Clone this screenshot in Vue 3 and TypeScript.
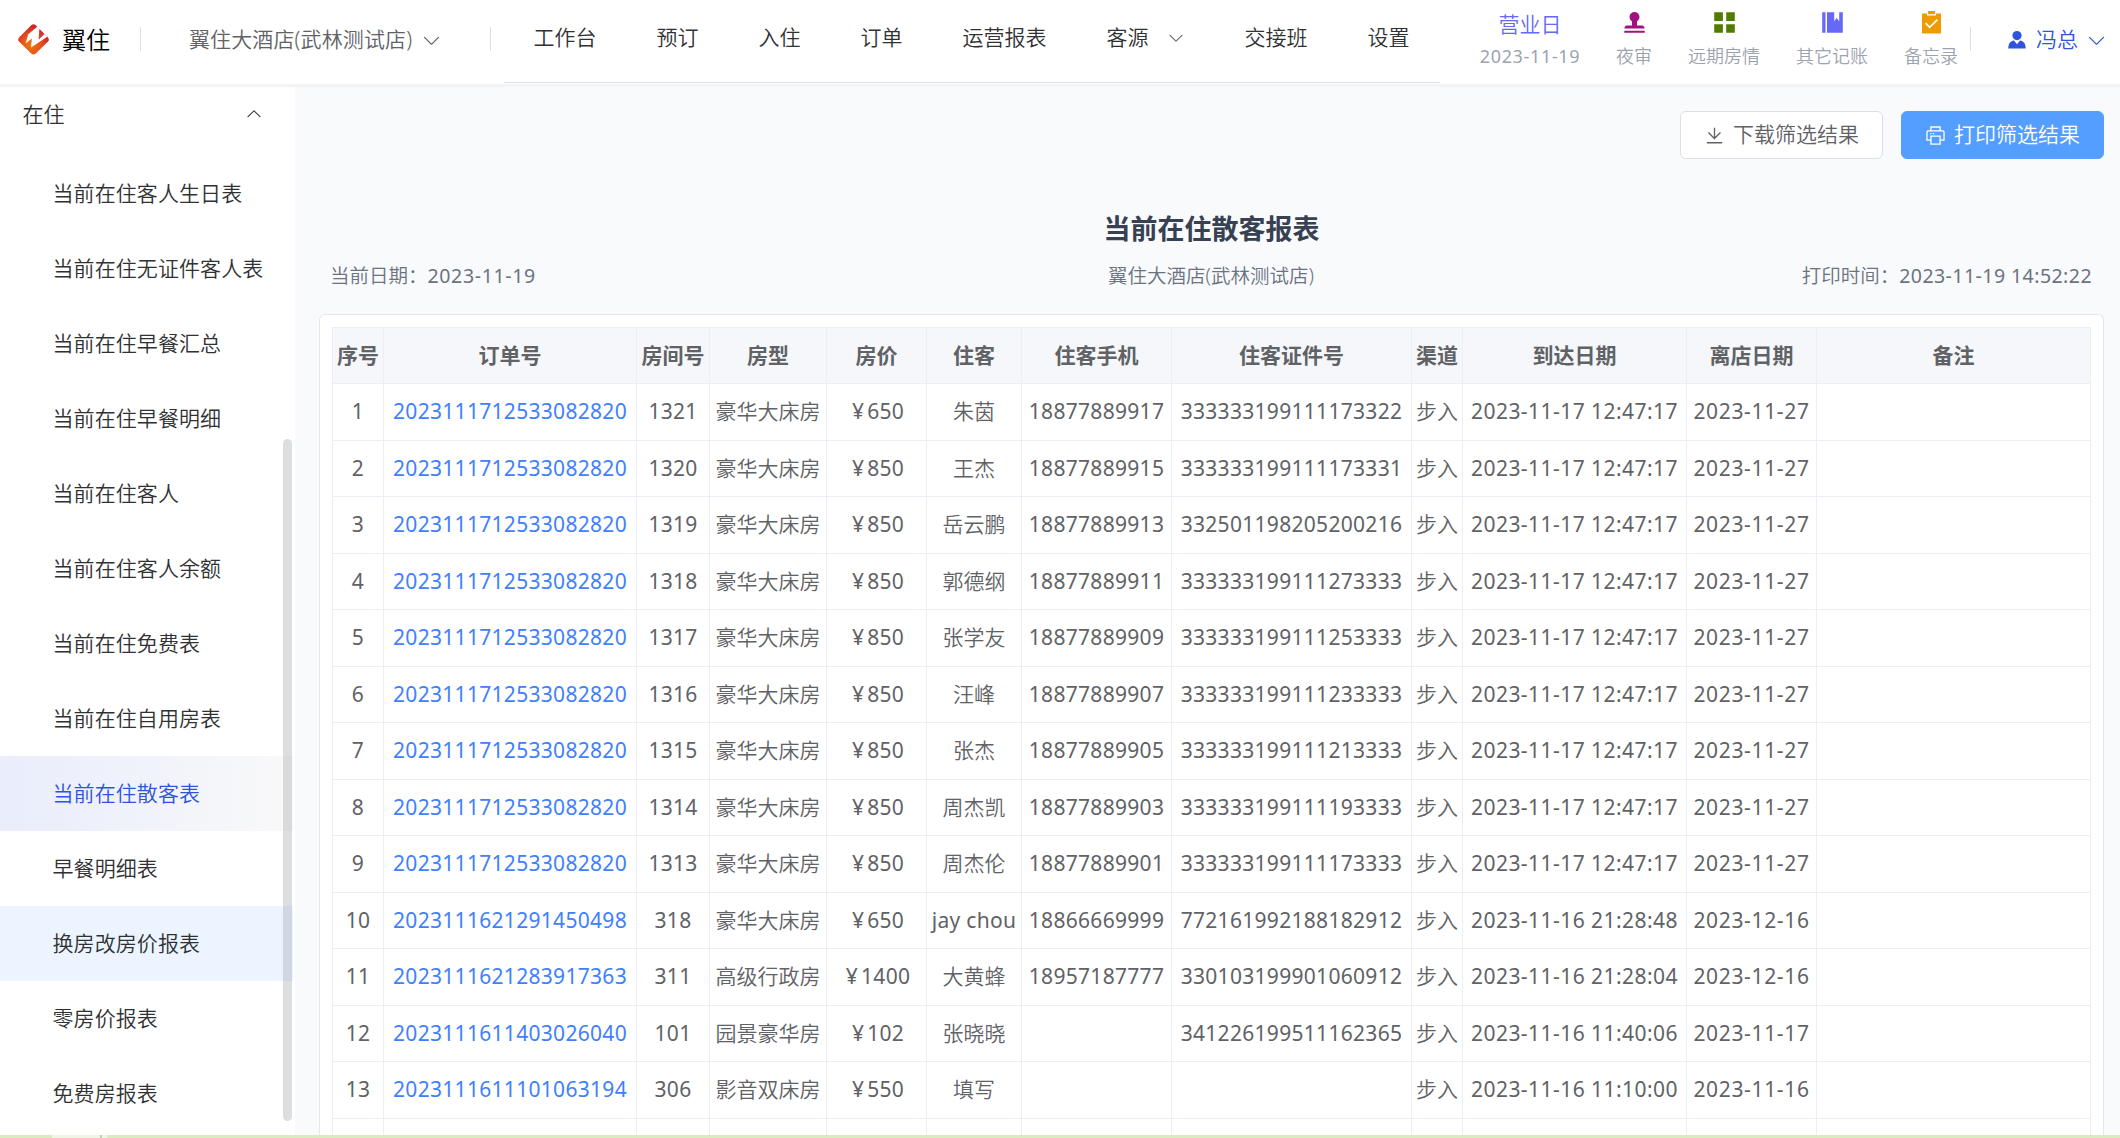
<script setup lang="ts">
interface NavItem { label: string; arrow?: boolean }
interface Guest {
  order: string; room: string; type: string; price: string; name: string
  phone: string; idNo: string; arrive: string; leave: string
}

const arrowDown = 'M831.872 340.864 512 652.672 192.128 340.864a30.592 30.592 0 0 0-42.752 0 29.12 29.12 0 0 0 0 41.6L489.664 714.24a32 32 0 0 0 44.672 0l340.288-331.712a29.12 29.12 0 0 0 0-41.728 30.592 30.592 0 0 0-42.752 0z'

const nav: NavItem[] = [
  { label: '工作台' }, { label: '预订' }, { label: '入住' }, { label: '订单' },
  { label: '运营报表' }, { label: '客源', arrow: true }, { label: '交接班' }, { label: '设置' },
]

const menu: string[] = [
  '当前在住客人生日表', '当前在住无证件客人表', '当前在住早餐汇总', '当前在住早餐明细',
  '当前在住客人', '当前在住客人余额', '当前在住免费表', '当前在住自用房表',
  '当前在住散客表', '早餐明细表', '换房改房价报表', '零房价报表', '免费房报表',
]
const activeItem = '当前在住散客表'
const hoverItem = '换房改房价报表'

const columns: string[] = ['序号', '订单号', '房间号', '房型', '房价', '住客', '住客手机', '住客证件号', '渠道', '到达日期', '离店日期', '备注']

const batch = (room: string, price: string, name: string, phone: string, idNo: string): Guest => ({
  order: '2023111712533082820', room, type: '豪华大床房', price, name, phone, idNo,
  arrive: '2023-11-17 12:47:17', leave: '2023-11-27',
})

const guests: Guest[] = [
  batch('1321', '650', '朱茵', '18877889917', '333333199111173322'),
  batch('1320', '850', '王杰', '18877889915', '333333199111173331'),
  batch('1319', '850', '岳云鹏', '18877889913', '332501198205200216'),
  batch('1318', '850', '郭德纲', '18877889911', '333333199111273333'),
  batch('1317', '850', '张学友', '18877889909', '333333199111253333'),
  batch('1316', '850', '汪峰', '18877889907', '333333199111233333'),
  batch('1315', '850', '张杰', '18877889905', '333333199111213333'),
  batch('1314', '850', '周杰凯', '18877889903', '333333199111193333'),
  batch('1313', '850', '周杰伦', '18877889901', '333333199111173333'),
  { order: '2023111621291450498', room: '318', type: '豪华大床房', price: '650', name: 'jay chou', phone: '18866669999', idNo: '772161992188182912', arrive: '2023-11-16 21:28:48', leave: '2023-12-16' },
  { order: '2023111621283917363', room: '311', type: '高级行政房', price: '1400', name: '大黄蜂', phone: '18957187777', idNo: '330103199901060912', arrive: '2023-11-16 21:28:04', leave: '2023-12-16' },
  { order: '2023111611403026040', room: '101', type: '园景豪华房', price: '102', name: '张晓晓', phone: '', idNo: '341226199511162365', arrive: '2023-11-16 11:40:06', leave: '2023-11-17' },
  { order: '2023111611101063194', room: '306', type: '影音双床房', price: '550', name: '填写', phone: '', idNo: '', arrive: '2023-11-16 11:10:00', leave: '2023-11-16' },
]
const isLatin = (s: string): boolean => /^[a-z ]+$/i.test(s)
</script>

<template>
  <div class="app">
    <header class="topbar">
      <div class="brand">
        <svg class="logo" viewBox="0 0 31 31">
          <defs>
            <radialGradient id="flame" gradientUnits="userSpaceOnUse" cx="13" cy="21" r="19">
              <stop offset="0" stop-color="#ec7a0c" />
              <stop offset=".45" stop-color="#e5581a" />
              <stop offset="1" stop-color="#d0232c" />
            </radialGradient>
          </defs>
          <path class="flame" d="M13.500 1Q15.500-.6 17.500 1L30 13.500Q31.700 15.500 30 17.500L17.500 29.800Q15.500 31.400 13.500 29.800L1 17.500Q-.6 15.500 1 13.500Z" />
          <path class="cut" d="M19.600 2.600 10.200 10.300 7.600 19.600 13.800 14.600 13 23.400 29.300 12.800 26 9.700 21 15.400 21.700 5Z" />
          <path class="flame" d="M21.400 5.200 25.800 10.400 20.600 15.600ZM17.500 22.500 28.500 13.500 30 16 18 27Z" />
        </svg>
        <span class="brand-name">翼住</span>
      </div>
      <i class="divider"></i>
      <div class="hotel">
        <span>翼住大酒店(武林测试店)</span>
        <svg class="i21" viewBox="0 0 1024 1024"><path :d="arrowDown" /></svg>
      </div>
      <i class="divider second"></i>
      <nav class="nav">
        <span v-for="n in nav" :key="n.label" class="nav-item">
          {{ n.label }}
          <svg v-if="n.arrow" class="nav-arrow" viewBox="0 0 1024 1024"><path :d="arrowDown" /></svg>
        </span>
      </nav>
      <div class="tools">
        <div class="tool day"><span class="tool-top">营业日</span><span class="tool-label num">2023-11-19</span></div>
        <div class="tool">
          <span class="tool-top stamp"><svg viewBox="0 0 21 21"><circle cx="10.5" cy="5" r="5" /><path d="M8 8h5v5.600h5.500q2 .4 2.200 2.900H.3q.2-2.500 2.200-2.900H8zM.3 18.700h20.400v2H.3z" /></svg></span>
          <span class="tool-label">夜审</span>
        </div>
        <div class="tool">
          <span class="tool-top grid"><svg viewBox="0 0 21 21"><path d="M.2 .2h8.700v8.700H.2zM12.200 .2h8.600v8.700h-8.600zM.2 12.200h8.700v8.600H.2zM12.200 12.200h8.600v8.600h-8.600z" /></svg></span>
          <span class="tool-label">远期房情</span>
        </div>
        <div class="tool">
          <span class="tool-top"><svg viewBox="0 0 21 21"><path d="M.2 .3h3.300v20.400H.2zM5 .3h7.200v8.900l2.400-3.200 2.600 3.200V.3h3.600v20.400H5z" /></svg></span>
          <span class="tool-label">其它记账</span>
        </div>
        <div class="tool">
          <span class="tool-top memo"><svg viewBox="0 0 21 21"><path d="M1 1.500h5v2h9v-2h5v20H1z" /><path d="M7-1h7v3.200H7z" /><path class="tick" d="M4.600 11.200l4 4.200 7.800-7.800" /></svg></span>
          <span class="tool-label">备忘录</span>
        </div>
      </div>
      <i class="divider"></i>
      <div class="user">
        <svg class="avatar" viewBox="0 0 18 18"><circle cx="9" cy="4.600" r="4.600" /><path d="M.3 17.500C.3 12.600 2.500 10 6 9.600L9 13.300 12 9.600C15.500 10 17.700 12.600 17.700 17.500z" /></svg>
        <span>冯总</span>
        <svg class="i21" viewBox="0 0 1024 1024"><path :d="arrowDown" /></svg>
      </div>
    </header>

    <div class="body">
      <aside class="sidebar">
        <div class="group">
          <span>在住</span>
          <svg class="i18 flip" viewBox="0 0 1024 1024"><path :d="arrowDown" /></svg>
        </div>
        <ul class="menu">
          <li v-for="m in menu" :key="m" :class="{ active: m === activeItem, hover: m === hoverItem }">{{ m }}</li>
        </ul>
        <div class="scrollbar"></div>
      </aside>

      <main class="content">
        <div class="actions">
          <button class="btn">
            <svg class="i21" viewBox="0 0 1024 1024"><path d="M160 832h704a32 32 0 1 1 0 64H160a32 32 0 1 1 0-64m384-253.696 236.288-236.352 45.248 45.248L508.800 704 192 387.200l45.248-45.248L480 584.704V128h64z" /></svg>
            <span>下载筛选结果</span>
          </button>
          <button class="btn primary">
            <svg class="i21" viewBox="0 0 1024 1024"><path d="M256 768H105.024c-14.272 0-19.456-1.472-24.640-4.288a29.056 29.056 0 0 1-12.160-12.096C65.536 746.432 64 741.248 64 727.040V379.072c0-42.816 4.480-58.304 12.800-73.984 8.384-15.616 20.672-27.904 36.288-36.288 15.680-8.320 31.168-12.800 73.984-12.800H256V64h512v192h68.928c42.816 0 58.304 4.480 73.984 12.800 15.616 8.384 27.904 20.672 36.288 36.288 8.320 15.680 12.800 31.168 12.800 73.984v347.904c0 14.272-1.472 19.456-4.288 24.640a29.056 29.056 0 0 1-12.096 12.160c-5.184 2.752-10.368 4.224-24.640 4.224H768v192H256zm64-192v320h384V576zm-64 128V512h512v192h128V379.072c0-29.376-1.408-36.480-5.248-43.776a23.296 23.296 0 0 0-10.048-10.048c-7.232-3.840-14.400-5.248-43.776-5.248H187.072c-29.376 0-36.480 1.408-43.776 5.248a23.296 23.296 0 0 0-10.048 10.048c-3.840 7.232-5.248 14.400-5.248 43.776V704zm64-448h384V128H320zm-64 128h64v64h-64zm128 0h64v64h-64z" /></svg>
            <span>打印筛选结果</span>
          </button>
        </div>
        <h1 class="title">当前在住散客报表</h1>
        <div class="meta">
          <span class="meta-side">当前日期：<b class="num date">2023-11-19</b></span>
          <span>翼住大酒店(武林测试店)</span>
          <span class="meta-side end">打印时间：<b class="num time">2023-11-19 14:52:22</b></span>
        </div>
        <section class="card">
          <div class="table">
            <div class="row head">
              <span v-for="c in columns" :key="c" class="cell">{{ c }}</span>
            </div>
            <div v-for="(g, i) in guests" :key="i" class="row">
              <span class="cell num">{{ i + 1 }}</span>
              <span class="cell num link">{{ g.order }}</span>
              <span class="cell num">{{ g.room }}</span>
              <span class="cell">{{ g.type }}</span>
              <span class="cell num price"><i class="yen">¥</i>{{ g.price }}</span>
              <span class="cell" :class="{ latin: isLatin(g.name) }">{{ g.name }}</span>
              <span class="cell num">{{ g.phone }}</span>
              <span class="cell num">{{ g.idNo }}</span>
              <span class="cell">步入</span>
              <span class="cell num time">{{ g.arrive }}</span>
              <span class="cell num date">{{ g.leave }}</span>
              <span class="cell"></span>
            </div>
            <div class="row">
              <span v-for="c in columns" :key="c" class="cell"></span>
            </div>
          </div>
        </section>
      </main>
    </div>
    <footer class="strip"><i class="s1"></i><i class="s2"></i><i class="s3"></i></footer>
  </div>
</template>

<style>
body { margin: 0; overflow: hidden; }
</style>

<style scoped>
.app {
  width: 2120px;
  height: 1138px;
  display: flex;
  flex-direction: column;
  overflow: hidden;
  background: #fff;
  color: #303133;
  font: 350 21px/30px "Noto Sans", "Noto Sans CJK SC", sans-serif;
  white-space: nowrap;
}
* { box-sizing: border-box; }
svg { display: block; flex: none; fill: currentColor; overflow: visible; }
i, b { font-style: normal; font-weight: inherit; }
.num { font-weight: 400; letter-spacing: .3px; }
.date { letter-spacing: .65px; }
.time { letter-spacing: .45px; }
.i21 { width: 21px; height: 21px; }
.i18 { width: 18px; height: 18px; }
.flip { transform: rotate(180deg); }

.topbar { height: 87px; flex: none; display: flex; align-items: flex-start; border-bottom: 3px solid #f2f3f5; }
.brand { width: 140px; height: 79px; padding-left: 18px; display: flex; align-items: center; }
.logo { width: 31px; height: 31px; }
.flame { fill: url(#flame); }
.cut { fill: #fff; }
.brand-name { margin-left: 13px; font-size: 24px; color: #000; }
.divider { width: 1px; height: 24px; margin-top: 27px; flex: none; background: #dcdfe6; }
.hotel { width: 349px; height: 80px; padding-left: 48px; display: flex; align-items: center; gap: 8px; color: #606266; }
.hotel span { width: 224px; padding-bottom: 2px; letter-spacing: .12px; }
.nav { width: 936px; height: 83px; margin-left: 13px; flex: none; display: flex; border-bottom: 1px solid #dcdfe6; }
.nav-item { height: 74px; padding: 0 30px 0 29.500px; margin-right: .5px; display: flex; align-items: center; }
.nav-arrow { width: 18px; height: 18px; margin: 2px 12px 0 18px; color: #606266; }
.nav-item:has(.nav-arrow) { padding-right: 18px; }
.tools { margin-left: 22px; width: 508px; flex: none; display: flex; }
.tool { flex: none; padding: 0 18px; display: flex; flex-direction: column; align-items: center; }
.tool-top { height: 45px; display: flex; align-items: center; color: #6669f8; }
.tool-top svg { width: 21px; height: 21px; }
.stamp { color: #a0117f; }
.grid { color: #527c00; }
.memo { color: #ee9b00; }
.tick { fill: none; stroke: #fff; stroke-width: 1.7; }
.day { width: 136px; }
.day .tool-top { padding-top: 2px; }
.tool-label { height: 22px; line-height: 22px; font-size: 18px; color: #9ca3af; }
.day .tool-label { letter-spacing: .65px; }
.user { height: 80px; padding-left: 37px; display: flex; align-items: center; color: #2f54db; }
.user span { padding-bottom: 2px; }
.avatar { width: 18px; height: 18px; margin-right: 10px; }
.user .i21 { margin-left: 8px; }

.body { flex: 1; min-height: 0; display: flex; }
.sidebar { position: relative; width: 295px; flex: none; overflow: hidden; }
.group { height: 69px; padding: 0 32px 15px 22.500px; display: flex; align-items: center; justify-content: space-between; }
.menu { margin: 0; padding: 0; width: 293px; list-style: none; }
.menu li { height: 75px; padding: 0 0 0 52.500px; line-height: 75px; letter-spacing: .08px; }
.menu .active { color: #2f54db; background: linear-gradient(90deg, #e9edfc, #f9f9f9); }
.menu .hover { background: #ecf5ff; }
.scrollbar { position: absolute; left: 283px; top: 352px; width: 9px; height: 682px; border-radius: 5px; background: rgba(144, 147, 153, .3); }

.content { flex: 1; min-width: 0; padding: 24px 16px 0 24px; background: #f9fafc; display: flex; flex-direction: column; }
.actions { display: flex; justify-content: flex-end; gap: 18px; height: 48px; }
.btn { width: 203px; height: 48px; padding: 0; display: flex; align-items: center; justify-content: center; gap: 8px; border: 1px solid #dcdfe6; border-radius: 6px; background: #fff; color: #606266; font: inherit; }
.btn span { padding-bottom: 2px; }
.primary { border-color: #549eff; background: #549eff; color: #fff; }
.title { height: 40px; margin: 50px 0 0; line-height: 40px; text-align: center; font-size: 27px; font-weight: 700; color: #374151; }
.meta { height: 30px; margin: 12px 12px 0 11px; display: flex; justify-content: space-between; font-size: 19.500px; color: #6b7280; }
.meta-side { flex: 1; }
.end { text-align: right; }
.card { flex: 1; min-height: 0; overflow: hidden; margin-top: 23px; padding: 12px; border: 1px solid #e4e7ed; border-bottom: 0; border-radius: 6px 6px 0 0; background: #fff; }
.table { width: 1759px; border: solid #ebeef5; border-width: 1px 0 0 1px; color: #606266; }
.row { display: grid; grid-template-columns: 51px 253px 73px 117px 100px 95px 150px 240px 51px 224px 130px 274px; height: 56px; }
.row:nth-child(even) { height: 57px; }
.row.head { height: 56px; background: #f5f7fa; font-weight: 700; }
.cell { display: flex; align-items: center; justify-content: center; min-width: 0; padding-bottom: 2px; border: solid #ebeef5; border-width: 0 1px 1px 0; }
.link { color: #4080ff; }
.price { padding-left: 3px; }
.yen { margin-right: 3px; }
.latin { font-weight: 400; letter-spacing: .3px; }

.strip { height: 3px; flex: none; display: flex; padding-left: 52px; background: #d9ecbf; }
.s1 { width: 48px; background: #eef5e3; }
.s2 { width: 2px; background: #bcd3a4; }
.s3 { width: 5px; background: #eef5e3; }
</style>
